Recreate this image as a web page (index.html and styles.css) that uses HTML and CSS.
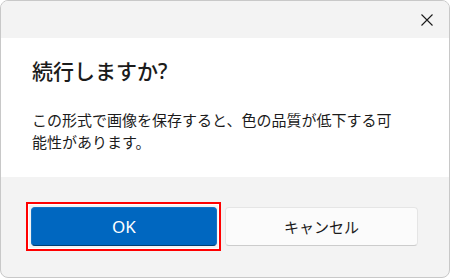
FILE: index.html
```html
<!DOCTYPE html>
<html lang="ja">
<head>
  <meta charset="UTF-8">
  <title>続行しますか?</title>
  <link rel="stylesheet" href="styles.css">
</head>
<body>
<div class="dialog">
  <div class="titlebar">
    <button class="close" aria-label="閉じる">
      <svg width="12" height="12" viewBox="0 0 12 12"><path d="M0.5 0.5 L11.5 11.5 M11.5 0.5 L0.5 11.5" stroke="#1b1b1b" stroke-width="1.1" fill="none"/></svg>
    </button>
  </div>
  <div class="content">
    <h1 class="title">続行しますか?</h1>
    <p class="message">この形式で画像を保存すると、色の品質が低下する可<br>能性があります。</p>
  </div>
  <div class="footer">
    <div class="focus-ring">
      <button class="btn primary">OK</button>
    </div>
    <button class="btn">キャンセル</button>
  </div>
</div>
</body>
</html>
```

FILE: styles.css
```css
* { box-sizing: border-box; margin: 0; padding: 0; }
html, body { width: 450px; height: 278px; background: #fff; overflow: hidden; }
body { font-family: "Noto Sans", "Noto Sans CJK JP", sans-serif; color: #1b1b1b; }

.dialog { width: 450px; height: 278px; border: 1px solid #c8c8c8; border-radius: 8px; overflow: hidden; display: flex; flex-direction: column; background: #f3f3f3; }

.titlebar { height: 37px; display: flex; justify-content: flex-end; align-items: center; background: #f3f3f3; }
.close { background: none; border: none; width: 12px; height: 12px; margin-right: 16px; display: flex; }

.content { height: 139px; background: #fff; padding: 18px 31px 0; }
.title { font-size: 21px; line-height: 30px; font-weight: 500; color: #1b1b1b; }
.message { margin-top: 23px; font-size: 15px; line-height: 22px; font-family: "Noto Sans CJK JP", sans-serif; color: #1b1b1b; }

.footer { display: flex; align-items: center; gap: 4px; padding-left: 25px; margin-top: 25px; height: 49px; }
.focus-ring { border: 2px solid #ff0000; padding: 3px 2px 3px 3px; background: #f3f3f3; box-shadow: inset 0 0 0 1px #fff; }
.btn { width: 193px; height: 39px; border-radius: 4px; border: 1px solid #e5e5e5; border-bottom-color: #cccccc; background: #fbfbfb; font-family: "Noto Sans CJK JP", sans-serif; font-size: 15px; color: #1b1b1b; }
.btn.primary { width: 186px; background: #0067c0; border-color: #1473c5; border-bottom-color: #003e73; color: #fff; font-family: "Noto Sans", sans-serif; font-size: 17px; }
```
